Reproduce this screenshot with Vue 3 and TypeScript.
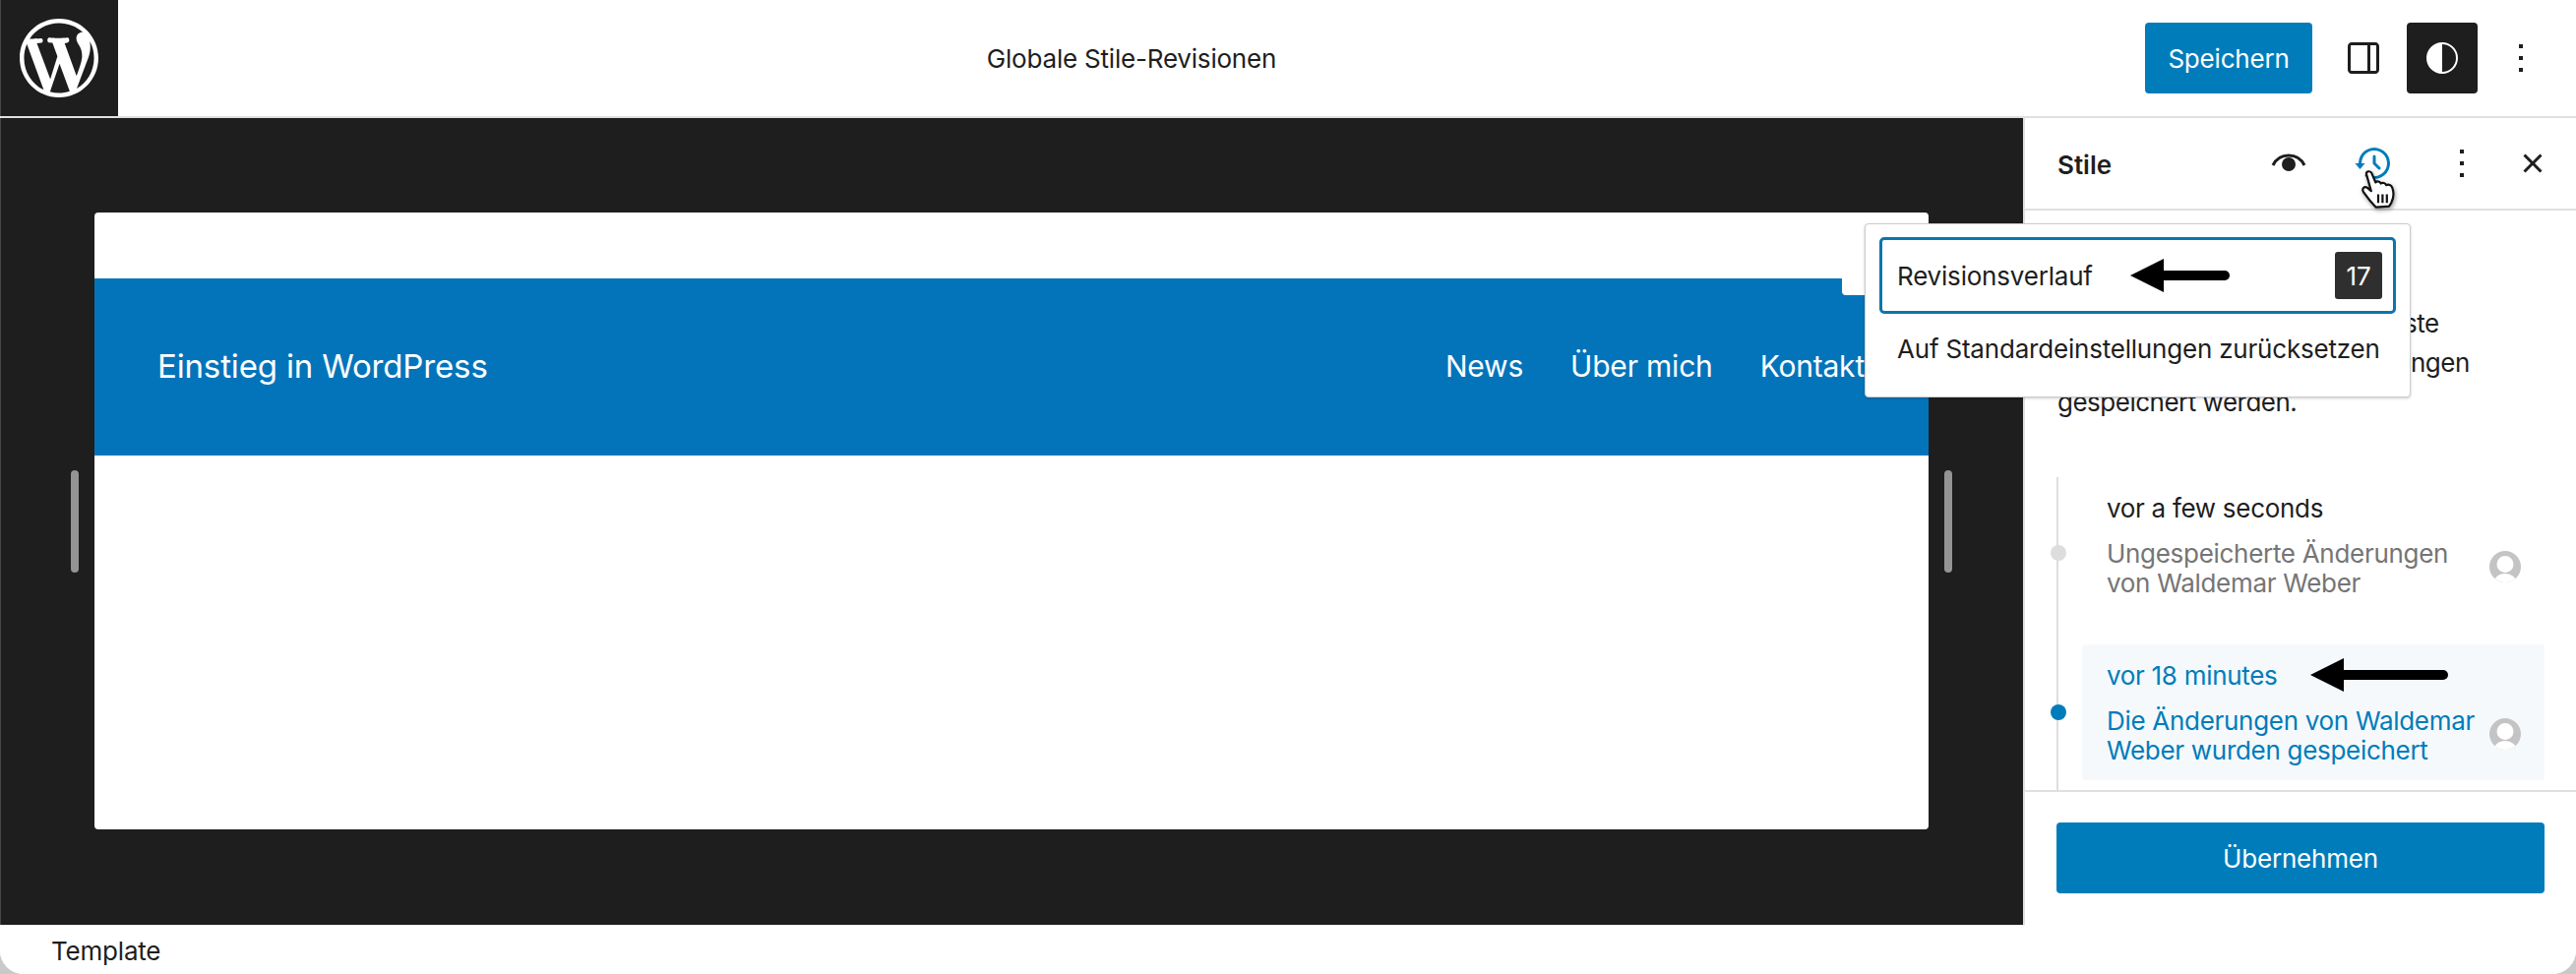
<script setup lang="ts">
interface Revision {
  id: number
  date: string
  text: string
  active: boolean
}

const revisions: Revision[] = [
  { id: 1, date: 'vor a few seconds', text: 'Ungespeicherte Änderungen von Waldemar Weber', active: false },
  { id: 2, date: 'vor 18 minutes', text: 'Die Änderungen von Waldemar Weber wurden gespeichert', active: true },
]
</script>

<template>
  <div class="app">
    <header class="topbar">
      <div class="logo">
        <svg viewBox="0 0 20 20" width="80" height="80" aria-hidden="true">
          <path fill="#fff" d="M20 10c0-5.51-4.49-10-10-10C4.48 0 0 4.49 0 10c0 5.52 4.48 10 10 10 5.51 0 10-4.48 10-10zM7.78 15.37L4.37 6.22c.55-.02 1.17-.08 1.17-.08.5-.06.44-1.13-.06-1.11 0 0-1.45.11-2.37.11-.18 0-.37 0-.58-.01C4.12 2.69 6.87 1.11 10 1.11c2.33 0 4.45.87 6.05 2.34-.68-.11-1.65.39-1.65 1.58 0 .74.45 1.36.9 2.1.35.61.55 1.36.55 2.46 0 1.49-1.4 5-1.4 5l-3.03-8.37c.54-.02.82-.17.82-.17.5-.05.44-1.25-.06-1.22 0 0-1.44.12-2.38.12-.87 0-2.33-.12-2.33-.12-.5-.03-.56 1.2-.06 1.22l.92.08 1.26 3.41zM17.41 10c.24-.64.74-1.87.43-4.25.7 1.29 1.05 2.71 1.05 4.25 0 3.29-1.73 6.24-4.4 7.78.97-2.59 1.94-5.2 2.92-7.78zM6.1 18.09C3.12 16.65 1.11 13.53 1.11 10c0-1.3.23-2.48.72-3.59C3.25 10.3 4.67 14.2 6.1 18.09zm4.03-6.63l2.58 6.98c-.86.29-1.76.45-2.71.45-.79 0-1.57-.11-2.29-.33.81-2.38 1.62-4.74 2.42-7.1z" />
        </svg>
      </div>
      <div class="doc-title">Globale Stile-Revisionen</div>
      <div class="top-actions">
        <button class="btn-primary save">Speichern</button>
        <button class="icon-btn panel-toggle">
          <svg viewBox="0 0 24 24" width="48" height="48"><path fill="#1e1e1e" d="M18 4H6c-1.1 0-2 .9-2 2v12c0 1.1.9 2 2 2h12c1.1 0 2-.9 2-2V6c0-1.1-.9-2-2-2zm-4 14.5H6c-.3 0-.5-.2-.5-.5V6c0-.3.2-.5.5-.5h8v13zm4.5-.5c0 .3-.2.5-.5.5h-2.5v-13H18c.3 0 .5.2.5.5v12z" /></svg>
        </button>
        <button class="icon-btn styles-toggle">
          <svg viewBox="0 0 24 24" width="48" height="48"><path fill="#fff" fill-rule="evenodd" d="M12 4a8 8 0 1 0 0 16 8 8 0 0 0 0-16zm0 15v-14a7 7 0 0 1 0 14z" /></svg>
        </button>
        <button class="icon-btn top-more">
          <svg viewBox="0 0 24 24" width="48" height="48"><path fill="#1e1e1e" d="M13 19h-2v-2h2v2zm0-6h-2v-2h2v2zm0-6h-2V5h2v2z" /></svg>
        </button>
      </div>
    </header>

    <main class="main">
      <section class="canvas">
        <span class="handle handle-left"></span>
        <span class="handle handle-right"></span>
        <div class="frame">
          <div class="frame-top"></div>
          <div class="site-header">
            <span class="site-title">Einstieg in WordPress</span>
            <nav class="site-nav">
              <span>News</span>
              <span>Über mich</span>
              <span>Kontakt</span>
            </nav>
            <span class="notch"></span>
          </div>
        </div>
      </section>

      <aside class="sidebar">
        <div class="side-head">
          <h2 class="side-title">Stile</h2>
          <button class="side-btn eye">
            <svg viewBox="0 0 24 24" width="48" height="48">
              <path fill="none" stroke="#1e1e1e" stroke-width="1.5" d="M4 13c1.6-3.2 4.4-5 8-5s6.400 1.800 8 5" />
              <circle cx="12" cy="12.500" r="3.500" fill="#1e1e1e" />
            </svg>
          </button>
          <button class="side-btn history">
            <svg viewBox="0 0 24 24" width="48" height="48"><path fill="#007cba" d="M5.500 12h1.750l-2.500 3-2.500-3H4a8 8 0 113.134 6.350l.907-1.194A6.500 6.500 0 105.500 12zm9.530 1.970l-2.280-2.280V8.500a.750.750 0 00-1.500 0V12a.747.747 0 00.218.529l2.502 2.502a.750.750 0 101.060-1.061z" /></svg>
          </button>
          <button class="side-btn more">
            <svg viewBox="0 0 24 24" width="48" height="48"><path fill="#1e1e1e" d="M13 19h-2v-2h2v2zm0-6h-2v-2h2v2zm0-6h-2V5h2v2z" /></svg>
          </button>
          <button class="side-btn close">
            <svg viewBox="0 0 24 24" width="48" height="48"><path fill="#1e1e1e" d="M12 13.060l3.712 3.713 1.061-1.060L13.061 12l3.712-3.712-1.060-1.060L12 10.938 8.288 7.227l-1.061 1.060L10.939 12l-3.712 3.712 1.060 1.061L12 13.061z" /></svg>
          </button>
          <svg class="cursor" viewBox="0 0 40 40" width="44" height="44" aria-hidden="true">
            <path fill="#fff" stroke="#111" stroke-width="2" stroke-linejoin="round" d="M9 6C9 3.500 13 3 14 5.500L17.500 14C19 12.500 21.500 13 22.500 15C24 13.800 26.500 14.500 27.500 16.500C29.500 15.500 32 16.500 33 19C34.500 23 34.500 28 32 33L30 36L18 37C14 33 10 28 6.500 23C4.500 20 7 17 10 19L13.500 22Z" />
            <path stroke="#111" stroke-width="2" d="M20 25v8M24 25v8M28 25v8" />
          </svg>
        </div>

        <div class="side-body">
          <p class="intro">Hier findest du die gesamte Liste<br />der letzten gemachten Änderungen<br />gespeichert werden.</p>
          <ol class="timeline">
            <li v-for="rev in revisions" :key="rev.id" class="rev" :class="{ 'rev-active': rev.active }">
              <span class="dot"></span>
              <div class="rev-date">{{ rev.date }}</div>
              <div class="rev-row">
                <span class="rev-text">{{ rev.text }}</span>
                <svg class="avatar" viewBox="0 0 32 32" width="32" height="32" aria-hidden="true">
                  <rect width="32" height="32" fill="#c4c4c4" />
                  <circle cx="16" cy="13.500" r="8.500" fill="#fff" />
                  <ellipse cx="16" cy="33" rx="12" ry="10" fill="#fff" />
                </svg>
              </div>
              <svg v-if="rev.active" class="arrow arrow-date" viewBox="0 0 140 34" width="140" height="34" aria-hidden="true">
                <path d="M0 17L34 0V34Z" fill="#000" />
                <path d="M30 17H135" stroke="#000" stroke-width="10" stroke-linecap="round" />
              </svg>
            </li>
          </ol>
        </div>

        <div class="side-foot">
          <button class="btn-primary apply">Übernehmen</button>
        </div>

        <div class="popover">
          <div class="menu-item focused">
            <span>Revisionsverlauf</span>
            <span class="badge">17</span>
            <svg class="arrow arrow-menu" viewBox="0 0 102 34" width="102" height="34" aria-hidden="true">
              <path d="M0 17L34 0V34Z" fill="#000" />
              <path d="M30 17H96" stroke="#000" stroke-width="10" stroke-linecap="round" />
            </svg>
          </div>
          <div class="menu-item plain">Auf Standardeinstellungen zurücksetzen</div>
        </div>
      </aside>
    </main>

    <footer class="statusbar">Template</footer>
  </div>
</template>

<style>
html, body {
  margin: 0;
  background: #c9c9c9;
}
</style>

<style scoped>
* {
  box-sizing: border-box;
}
.app {
  position: relative;
  width: 2618px;
  height: 990px;
  display: flex;
  flex-direction: column;
  overflow: hidden;
  background: #fff;
  border-radius: 0 0 24px 24px;
  font-family: Inter, "Liberation Sans", sans-serif;
  font-size: 26px;
  letter-spacing: -0.2px;
  color: #1e1e1e;
}
.app::after {
  content: "";
  position: absolute;
  left: 0;
  top: 0;
  bottom: 0;
  width: 1px;
  background: rgba(255, 255, 255, 0.18);
}
button {
  font: inherit;
  letter-spacing: inherit;
  border: 0;
  padding: 0;
  background: none;
  color: inherit;
}
.topbar {
  height: 120px;
  flex: none;
  display: flex;
  border-bottom: 2px solid #e0e0e0;
}
.logo {
  width: 120px;
  height: 118px;
  background: #1e1e1e;
  display: flex;
  align-items: center;
  justify-content: center;
}
.doc-title {
  flex: 1;
  display: flex;
  align-items: center;
  justify-content: center;
}
.top-actions {
  width: 438px;
  display: flex;
  align-items: center;
}
.btn-primary {
  background: #007cba;
  color: #fff;
  border-radius: 4px;
  height: 72px;
}
.save {
  width: 170px;
}
.icon-btn {
  width: 48px;
  height: 48px;
  display: flex;
  align-items: center;
  justify-content: center;
}
.panel-toggle {
  margin-left: 28px;
}
.styles-toggle {
  width: 72px;
  height: 72px;
  margin-left: 20px;
  background: #1e1e1e;
  border-radius: 4px;
}
.top-more {
  margin-left: 20px;
}
.main {
  flex: none;
  height: 820px;
  display: flex;
}
.canvas {
  position: relative;
  flex: none;
  width: 2056px;
  background: #1e1e1e;
  padding: 96px 96px 97px;
}
.handle {
  position: absolute;
  top: 358px;
  width: 8px;
  height: 104px;
  border-radius: 4px;
  background: #949494;
}
.handle-left {
  left: 72px;
}
.handle-right {
  left: 1976px;
}
.frame {
  height: 627px;
  background: #fff;
  border-radius: 4px;
  overflow: hidden;
}
.frame-top {
  height: 67px;
}
.site-header {
  position: relative;
  height: 180px;
  background: #0474ba;
  color: #fff;
  display: flex;
  align-items: center;
  justify-content: space-between;
  padding: 0 65px 2px 64px;
}
.site-title {
  font-size: 33px;
  letter-spacing: -0.15px;
}
.site-nav {
  display: flex;
  gap: 48px;
  font-size: 30px;
  letter-spacing: -0.2px;
}
.notch {
  position: absolute;
  top: 0;
  right: 0;
  width: 88px;
  height: 17px;
  background: #fff;
  border-radius: 0 0 0 4px;
}
.sidebar {
  position: relative;
  flex: none;
  width: 562px;
  display: flex;
  flex-direction: column;
  border-left: 2px solid #e0e0e0;
  background: #fff;
}
.side-head {
  position: relative;
  height: 94px;
  flex: none;
  display: flex;
  align-items: center;
  padding: 0 20px 0 33px;
  border-bottom: 2px solid #e0e0e0;
}
.side-title {
  margin: 0 auto 0 0;
  padding-top: 2px;
  font-size: 26px;
  font-weight: 600;
  letter-spacing: 0;
}
.side-btn {
  width: 48px;
  height: 48px;
}
.side-btn svg {
  display: block;
}
.history {
  margin-left: 39px;
}
.more {
  margin-left: 41px;
}
.close {
  margin-left: 24px;
}
.cursor {
  position: absolute;
  left: 337px;
  top: 50px;
  filter: drop-shadow(1px 2px 2px rgba(0, 0, 0, 0.4));
}
.side-body {
  flex: 1;
  min-height: 0;
  overflow: hidden;
}
.intro {
  margin: 0;
  padding: 95px 0 0 33px;
  line-height: 40px;
  height: 271px;
  white-space: nowrap;
  letter-spacing: -0.5px;
}
.timeline {
  list-style: none;
  margin: 0 0 0 32px;
  padding: 0 0 40px 24px;
  border-left: 2px solid #ddd;
  letter-spacing: -0.3px;
}
.rev {
  position: relative;
  width: 470px;
  height: 154px;
  margin-bottom: 16px;
  padding: 17px 24px 0 25px;
  border-radius: 4px;
  color: #757575;
}
.rev-active {
  height: 138px;
  background: #f5f9fc;
  color: #007cba;
}
.rev-date {
  line-height: 30px;
  color: #1e1e1e;
}
.rev-active .rev-date {
  color: #007cba;
}
.rev-row {
  margin-top: 16px;
  display: flex;
  align-items: flex-start;
  justify-content: space-between;
}
.rev-text {
  width: 386px;
  line-height: 30px;
}
.avatar {
  flex: none;
  margin-top: 12px;
  border-radius: 50%;
}
.dot {
  position: absolute;
  left: -32px;
  top: 69px;
  width: 16px;
  height: 16px;
  margin-top: -8px;
  border-radius: 50%;
  background: #ddd;
}
.rev:first-child .dot {
  top: 77px;
}
.rev-active .dot {
  background: #007cba;
}
.arrow {
  position: absolute;
}
.arrow-date {
  left: 232px;
  top: 14px;
}
.side-foot {
  flex: none;
  height: 137px;
  padding: 31px 32px 0;
  border-top: 2px solid #e0e0e0;
}
.apply {
  width: 496px;
  display: block;
}
.popover {
  position: absolute;
  left: -163px;
  top: 107px;
  width: 555px;
  height: 177px;
  padding: 13px 14px;
  background: #fff;
  border: 1px solid #ccc;
  border-radius: 4px;
  box-shadow: 0 1px 3px rgba(0, 0, 0, 0.2);
}
.menu-item {
  position: relative;
  display: flex;
  align-items: center;
  justify-content: space-between;
}
.focused {
  height: 78px;
  padding: 0 11px 0 15px;
  border: 3px solid #0b76ad;
  border-radius: 5px;
}
.plain {
  height: 70px;
  padding-left: 18px;
  white-space: nowrap;
}
.badge {
  width: 48px;
  height: 48px;
  background: #2f2f2f;
  color: #fff;
  border-radius: 3px;
  display: flex;
  align-items: center;
  justify-content: center;
}
.arrow-menu {
  left: 252px;
  top: 19px;
}
.statusbar {
  flex: 1;
  display: flex;
  align-items: center;
  padding: 2px 0 0 52px;
  background: #fff;
}
</style>
